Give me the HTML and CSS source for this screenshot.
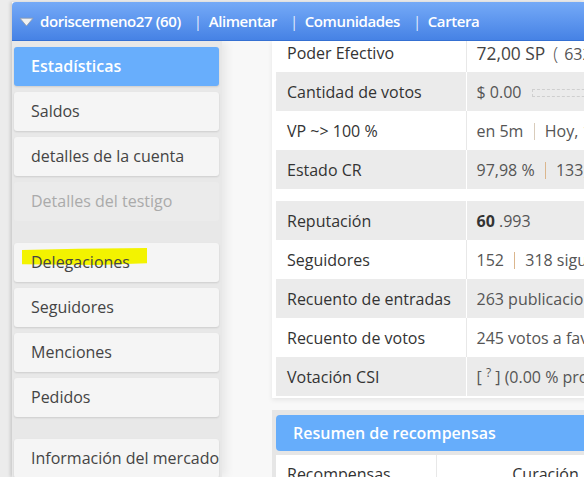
FILE: index.html
```html
<!DOCTYPE html>
<html>
<head>
<meta charset="UTF-8">
<title>Estadísticas</title>
<link rel="stylesheet" href="styles.css">
</head>
<body>
	<div class="app">
		<header class="topbar">
			<svg class="caret" width="15" height="10" viewBox="0 0 15 10"><path d="M1 1.2h13L7.5 9z" fill="#f1f1f1" stroke="#8e99aa" stroke-width="0.8" stroke-linejoin="round"/></svg>
			<span>doriscermeno27 (60)</span>
			<span class="bar">|</span><span>Alimentar</span>
			<span class="bar">|</span><span>Comunidades</span>
			<span class="bar">|</span><span>Cartera</span>
		</header>

		<div class="layout">
			<nav class="sidebar">
				<div class="navGroup">
					<div class="navItem active">Estadísticas</div>
					<div class="navItem">Saldos</div>
					<div class="navItem">detalles de la cuenta</div>
					<div class="navItem disabled">Detalles del testigo</div>
				</div>
				<div class="navGroup">
					<div class="navItem marked"><span>Delegaciones</span></div>
					<div class="navItem">Seguidores</div>
					<div class="navItem">Menciones</div>
					<div class="navItem">Pedidos</div>
				</div>
				<div class="navGroup">
					<div class="navItem">Información del mercado</div>
				</div>
			</nav>

			<main class="content">
				<section class="panel">
					<table class="stats">
						<tr class="cut"><td class="label">Poder Efectivo</td><td class="value"><span class="strong">72,00 SP</span><span class="paren">(</span>632,41 SP )</td></tr>
						<tr class="alt"><td class="label">Cantidad de votos</td><td class="value">$ 0.00 <span class="meter"></span></td></tr>
						<tr><td class="label">VP ~&gt; 100 %</td><td class="value">en 5m <span class="sep"></span> Hoy, 14:32</td></tr>
						<tr class="alt"><td class="label">Estado CR</td><td class="value">97,98 % <span class="sep warm"></span> 133,52 RC</td></tr>
					</table>
					<table class="stats">
						<tr class="alt"><td class="label">Reputación</td><td class="value"><b>60</b> .993</td></tr>
						<tr><td class="label">Seguidores</td><td class="value">152 <span class="sep warm"></span> 318 siguiendo</td></tr>
						<tr class="alt"><td class="label">Recuento de entradas</td><td class="value">263 publicaciones</td></tr>
						<tr><td class="label">Recuento de votos</td><td class="value">245 votos a favor</td></tr>
						<tr class="alt"><td class="label">Votación CSI</td><td class="value">[ <sup>?</sup> ] (0.00 % propio)</td></tr>
					</table>
				</section>

				<section class="card">
					<h2 class="cardTitle">Resumen de recompensas</h2>
					<table class="rewards">
						<tr><td class="label">Recompensas</td><td class="wide">Curación</td><td>Autor</td></tr>
						<tr><td class="label">Total</td><td class="wide">0.000 SP</td><td>0.000 SP</td></tr>
					</table>
				</section>
			</main>
		</div>
	</div>
</body>
</html>
```

FILE: styles.css
```css
html, body {
	margin: 0;
	height: 100%;
	overflow: hidden;
}
body {
	background: #ececec;
	font-family: 'Open Sans', sans-serif;
	font-size: 16px;
	color: #333;
}
.app {
	margin: 2px 0 0 12px;
	height: calc(100% - 2px);
	box-shadow: -2px 0 3px rgba(0,0,0,0.12);
	background: #f8f8f8;
}

/* top bar */
.topbar {
	height: 38px;
	display: flex;
	align-items: center;
	padding-left: 7px;
	background: linear-gradient(#75aaf7, #4682e5);
	border-bottom: 1px solid #3570d2;
	border-radius: 4px 0 0 0;
	color: white;
	font-size: 15px;
	font-weight: 600;
	letter-spacing: -0.4px;
	white-space: nowrap;
	position: relative;
	z-index: 2;
}
.caret {
	margin: 1px 6px 0 0;
}
.bar {
	padding: 0 7px 0 13px;
	font-size: 15px;
	font-weight: 400;
	color: rgba(255,255,255,0.85);
}

.layout {
	display: flex;
	height: calc(100% - 39px);
}

/* side menu */
.sidebar {
	width: 205px;
	flex-shrink: 0;
	padding: 6px 3px 0 2px;
	background: #e8e8e8;
	box-shadow: 4px 0 9px rgba(0,0,0,0.07);
	position: relative;
	z-index: 1;
}
.navGroup + .navGroup {
	padding-top: 16px;
}
.navItem {
	height: 39px;
	line-height: 39px;
	padding-left: 17px;
	margin-bottom: 6px;
	background: #f5f5f5;
	border-radius: 3px;
	box-shadow: 0 1px 2px rgba(0,0,0,0.12);
	color: #444;
	white-space: nowrap;
	position: relative;
}
.navItem.active {
	background: #68aefc;
	color: white;
	font-weight: 600;
}
.navItem.disabled {
	background: #ebebeb;
	color: #aaa;
	box-shadow: none;
}
.navItem.marked::before {
	content: '';
	position: absolute;
	left: 8px;
	top: 5px;
	width: 125px;
	height: 17px;
	background: #f3f300;
	clip-path: polygon(0 12%, 45% 4%, 100% 0, 100% 90%, 60% 100%, 0 96%);
}
.navItem.marked span {
	position: relative;
}

/* stats */
.content {
	flex: 1;
	min-width: 0;
	overflow: hidden;
	padding-left: 50px;
}
.panel {
	width: 520px;
	background: white;
	padding: 0 0 2px 4px;
	box-shadow: 0 2px 5px rgba(0,0,0,0.08);
}
.stats {
	width: 100%;
	border-collapse: collapse;
}
.stats + .stats {
	margin-top: 12px;
}
.stats td {
	height: 39px;
	padding: 0;
	white-space: nowrap;
}
.stats .label {
	width: 190px;
	box-sizing: border-box;
	padding-left: 11px;
}
.stats .value {
	padding-left: 10px;
	border-left: 1px solid #e8e8e8;
	color: #555;
}
.stats tr.alt td {
	background: #ebebeb;
}
.stats tr.alt .value {
	border-left-color: white;
}
.stats tr.cut td {
	height: 31px;
	line-height: 24px;
	vertical-align: top;
}
.strong {
	font-size: 17.4px;
	color: #444;
}
.paren {
	margin: 0 6px 0 8px;
	font-weight: 300;
	font-size: 18px;
}
.stats b {
	color: #333;
}
.stats sup {
	font-size: 12px;
}
.meter {
	display: inline-block;
	width: 200px;
	height: 6px;
	margin-left: 6px;
	border: 1px dashed #cfcfcf;
	vertical-align: middle;
}
.sep {
	display: inline-block;
	width: 1px;
	height: 17px;
	margin: 0 6px;
	background: #d9ccbb;
	vertical-align: -3px;
}
.sep.warm {
	background: #dbb68d;
}

/* rewards */
.card {
	width: 520px;
	margin-top: 12px;
	padding: 5px 0 0 4px;
	background: #e6e6e6;
}
.cardTitle {
	margin: 0;
	height: 36px;
	line-height: 36px;
	padding-left: 17px;
	background: #66adfb;
	border-radius: 4px 0 0 4px;
	color: white;
	font-size: 16px;
	font-weight: 600;
}
.rewards {
	width: 100%;
	margin-top: 4px;
	border-collapse: collapse;
	background: white;
}
.rewards td {
	height: 38px;
	padding: 0;
	text-align: center;
	border-left: 1px solid #e8e8e8;
	white-space: nowrap;
}
.rewards .label {
	width: 160px;
	box-sizing: border-box;
	padding-left: 11px;
	text-align: left;
	border-left: none;
}
.rewards .wide {
	width: 218px;
}
```
